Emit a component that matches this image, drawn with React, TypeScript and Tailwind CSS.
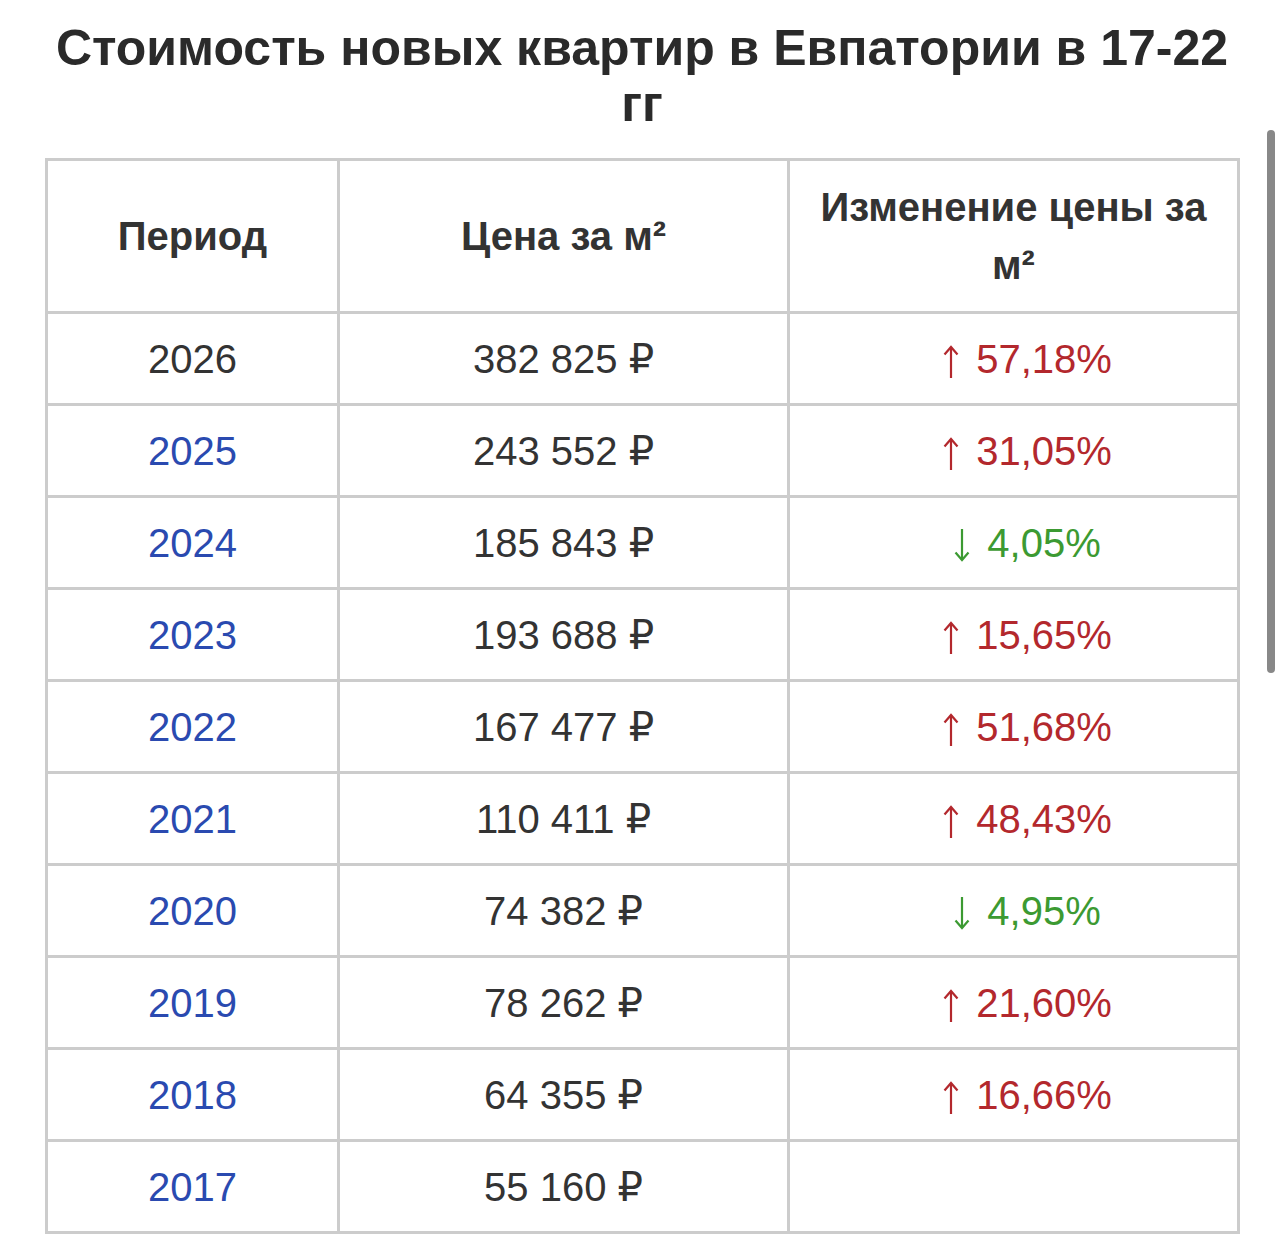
import React from "react";

const rows: { year: string; price: string; change?: string; up?: boolean; link: boolean }[] = [
  { year: "2026", price: "382 825 ₽", change: "57,18%", up: true, link: false },
  { year: "2025", price: "243 552 ₽", change: "31,05%", up: true, link: true },
  { year: "2024", price: "185 843 ₽", change: "4,05%", up: false, link: true },
  { year: "2023", price: "193 688 ₽", change: "15,65%", up: true, link: true },
  { year: "2022", price: "167 477 ₽", change: "51,68%", up: true, link: true },
  { year: "2021", price: "110 411 ₽", change: "48,43%", up: true, link: true },
  { year: "2020", price: "74 382 ₽", change: "4,95%", up: false, link: true },
  { year: "2019", price: "78 262 ₽", change: "21,60%", up: true, link: true },
  { year: "2018", price: "64 355 ₽", change: "16,66%", up: true, link: true },
  { year: "2017", price: "55 160 ₽", link: true },
];

function Arrow({ up }: { up: boolean }) {
  return (
    <svg
      width="16"
      height="33"
      viewBox="0 0 16 33"
      className="inline-block mr-[17px]"
      fill="none"
      stroke="currentColor"
      strokeWidth="2.2"
      strokeLinecap="butt"
      strokeLinejoin="miter"
    >
      {up ? (
        <>
          <line x1="8" y1="2" x2="8" y2="33" />
          <polyline points="1.5,9.5 8,2 14.5,9.5" />
        </>
      ) : (
        <>
          <line x1="8" y1="0" x2="8" y2="31" />
          <polyline points="1.5,23.5 8,31 14.5,23.5" />
        </>
      )}
    </svg>
  );
}

export default function App() {
  return (
    <div
      className="relative w-[1284px] h-[1241px] overflow-hidden bg-white text-[#333]"
      style={{ fontFamily: '"Liberation Sans", Arial, "DejaVu Sans", sans-serif' }}
    >
      <h1 className="pt-[20px] px-[40px] text-center text-[50px] leading-[56px] font-bold text-[#2a2a2a]">
        Стоимость новых квартир в Евпатории в 17-22 гг
      </h1>
      <table className="ml-[45px] mt-[26px] w-[1192px] border-collapse border-[3px] border-[#cccccc] table-fixed">
        <colgroup>
          <col className="w-[292px]" />
          <col className="w-[450px]" />
          <col className="w-[450px]" />
        </colgroup>
        <thead>
          <tr className="h-[153px]">
            <th className="border-[3px] border-[#cccccc] text-[40px] leading-[58px] font-bold text-[#333] px-[16px]">Период</th>
            <th className="border-[3px] border-[#cccccc] text-[40px] leading-[58px] font-bold text-[#333] px-[16px]">Цена за м²</th>
            <th className="border-[3px] border-[#cccccc] text-[40px] leading-[58px] font-bold text-[#333] px-[16px]">Изменение цены за м²</th>
          </tr>
        </thead>
        <tbody>
          {rows.map((r) => (
            <tr key={r.year} className="h-[92px]">
              <td className={"border-[3px] border-[#cccccc] text-center text-[40px] " + (r.link ? "text-[#2a4ab0]" : "text-[#333]")}>
                {r.year}
              </td>
              <td className="border-[3px] border-[#cccccc] text-center text-[40px] text-[#333]">{r.price}</td>
              <td className={"border-[3px] border-[#cccccc] text-center text-[40px] pl-[28px] " + (r.up ? "text-[#b3282d]" : "text-[#3c9a32]")}>
                {r.change ? (
                  <span className="whitespace-nowrap">
                    <Arrow up={!!r.up} />
                    {r.change}
                  </span>
                ) : null}
              </td>
            </tr>
          ))}
        </tbody>
      </table>
      <div className="absolute left-[1267px] top-[130px] w-[8px] h-[543px] rounded-full bg-[#888888]" />
    </div>
  );
}
